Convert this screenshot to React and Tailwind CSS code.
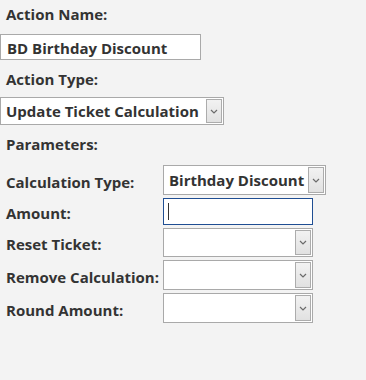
import React from 'react';

const font = { fontFamily: '"Open Sans", "Noto Sans", sans-serif' };

const Chevron = () => (
  <svg width="8" height="5" viewBox="0 0 8 5" className="block">
    <path d="M1 1 L4 4 L7 1" fill="none" stroke="#6b6b6b" strokeWidth="1.2" />
  </svg>
);

const Select = ({ value, className }) => (
  <div className={`relative bg-white border border-[#a9a9a9] ${className}`}>
    {value && (
      <span className="absolute left-[5px] top-1/2 -translate-y-1/2 whitespace-nowrap text-[15px] leading-[20px] font-bold text-[#333]">
        {value}
      </span>
    )}
    <div className="absolute right-px top-px bottom-px w-[16px] border border-[#acacac] bg-gradient-to-b from-[#f2f2f2] to-[#e1e1e1] flex items-center justify-center">
      <Chevron />
    </div>
  </div>
);

const Row = ({ label, children }) => (
  <div className="flex items-center">
    <div className="w-[163px] pl-[6px] pt-[3px] text-[15px] leading-[20px] font-bold text-[#333] whitespace-nowrap">{label}</div>
    {children}
  </div>
);

export default function App() {
  return (
    <div className="w-[366px] h-[380px] bg-[#f3f3f3] overflow-hidden" style={font}>
      <div className="pl-[6px] pt-[4px] h-[34px] text-[15px] leading-[20px] font-bold text-[#333]">Action Name:</div>
      <div className="h-[26px] w-[201px] bg-white border border-[#a9a9a9] flex items-center pl-[6px] pt-[1px] text-[15px] leading-[20px] font-bold text-[#333]">
        BD Birthday Discount
      </div>
      <div className="pl-[6px] pt-[9px] h-[37px] text-[15px] leading-[20px] font-bold text-[#333]">Action Type:</div>
      <Select value="Update Ticket Calculation" className="h-[28px] w-[224px]" />
      <div className="pl-[6px] pt-[9px] h-[40px] text-[15px] leading-[20px] font-bold text-[#333]">Parameters:</div>
      <div className="flex flex-col gap-[3px]">
        <Row label="Calculation Type:">
          <Select value="Birthday Discount" className="h-[30px] w-[163px]" />
        </Row>
        <Row label="Amount:">
          <div className="h-[27px] w-[150px] bg-white border border-[#1f4e93] flex items-center pl-[4px]">
            <div className="w-px h-[17px] bg-[#333]" />
          </div>
        </Row>
        <Row label="Reset Ticket:">
          <Select className="h-[29px] w-[150px]" />
        </Row>
        <Row label="Remove Calculation:">
          <Select className="h-[30px] w-[150px]" />
        </Row>
        <Row label="Round Amount:">
          <Select className="h-[30px] w-[150px]" />
        </Row>
      </div>
    </div>
  );
}
